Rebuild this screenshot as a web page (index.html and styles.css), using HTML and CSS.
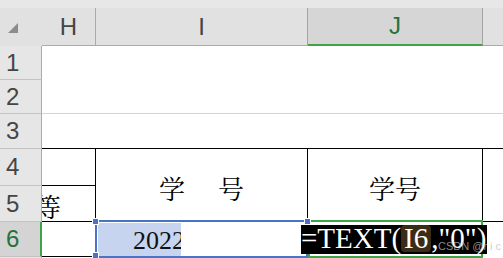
FILE: index.html
```html
<!DOCTYPE html>
<html>
<head>
    <title>Sheet</title>
    <link rel="stylesheet" href="styles.css">
</head>
<body>
    <div class="sheet">
        <div class="strip"></div>

        <div class="hdr corner">
            <svg width="10" height="10" viewBox="0 0 10 10"><polygon points="10,0 10,10 0,10" fill="#8c8c8c"/></svg>
        </div>
        <div class="hdr col-h">H</div>
        <div class="hdr col-i">I</div>
        <div class="hdr col-j">J</div>
        <div class="hdr col-k"></div>

        <div class="rh r1">1</div>
        <div class="rh r2">2</div>
        <div class="rh r3">3</div>
        <div class="rh r4">4</div>
        <div class="rh r5">5</div>
        <div class="rh r6 active">6</div>
        <div class="rh r7"></div>

        <div class="cell top-block"></div>
        <div class="cell row3"></div>

        <div class="cell h4"></div>
        <div class="cell h5"><span class="clip-char">等</span></div>
        <div class="cell i45"><span class="title-spaced"><span>学</span><span>号</span></span></div>
        <div class="cell j45">学号</div>
        <div class="cell k45"></div>

        <div class="cell h6"></div>
        <div class="cell i6"><span class="ref-fill">2022</span></div>
        <div class="cell j6"></div>
        <div class="cell k6"></div>

        <!-- selection + editing overlays -->
        <div class="sel-ref"></div>
        <div class="sel-active"></div>
        <div class="handle tl"></div>
        <div class="handle bl"></div>
        <div class="handle tr"></div>
        <div class="formula">=TEXT(<span class="ref">I6</span>,"0")</div>
        <div class="mark">CSDN @r i c k</div>
    </div>
</body>
</html>
```

FILE: styles.css
```css
body {
    margin: 0;
    background: #fff;
}

.sheet {
    position: relative;
    width: 503px;
    height: 258px;
    overflow: hidden;
    display: grid;
    grid-template-columns: 42px 54px 212px 175px 20px;
    grid-template-rows: 8px 38px 34px 34px 35px 37px 36px 35px 1px;
    font-family: "Liberation Sans", Arial, sans-serif;
}

.strip {
    grid-column: 1 / -1;
    grid-row: 1 / 2;
    background: #e7e7e7;
}

/* column headers */
.hdr {
    grid-row: 2 / 3;
    background: #e1e1e1;
    border-bottom: 1px solid #ababab;
    color: #454545;
    font-size: 24px;
    display: flex;
    align-items: center;
    justify-content: center;
    box-sizing: border-box;
}

.corner {
    grid-column: 1 / 2;
    border-bottom: none;
    justify-content: flex-start;
    align-items: flex-start;
    padding: 15px 0 0 8px;
}

.col-h { grid-column: 2 / 3; border-right: 1px solid #ababab; }
.col-i { grid-column: 3 / 4; border-right: 1px solid #a3a3a3; }
.col-j {
    grid-column: 4 / 5;
    background: #d6d6d6;
    border-right: 1px solid #a3a3a3;
    border-bottom: 2px solid #3fa34a;
    color: #21733f;
}
.col-k { grid-column: 5 / 6; }

/* row headers */
.rh {
    grid-column: 1 / 2;
    background: #e6e6e6;
    border-right: 1px solid #ababab;
    border-bottom: 1px solid #c3c3c3;
    color: #454545;
    font-size: 24px;
    display: flex;
    align-items: center;
    padding-left: 6px;
    box-sizing: border-box;
}

.r1 { grid-row: 3 / 4; }
.r2 { grid-row: 4 / 5; }
.r3 { grid-row: 5 / 6; }
.r4 { grid-row: 6 / 7; }
.r5 { grid-row: 7 / 8; }
.r6 { grid-row: 8 / 9; }
.r7 { grid-row: 9 / 10; border-bottom: none; }

.rh.active {
    background: #d4d4d4;
    color: #21733f;
    border-right: 2px solid #3fa34a;
}

/* cells */
.cell {
    box-sizing: border-box;
    background: #fff;
    font-family: "Noto Serif CJK SC", "Noto Sans CJK SC", serif;
    font-size: 26px;
    color: #000;
    overflow: hidden;
}

.top-block {
    grid-column: 2 / 6;
    grid-row: 3 / 5;
    border-bottom: 1px solid #d4d4d4;
}

.row3 {
    grid-column: 2 / 6;
    grid-row: 5 / 6;
    border-bottom: 1px solid #000;
}

.h4 {
    grid-column: 2 / 3;
    grid-row: 6 / 7;
    border-right: 1px solid #000;
    border-bottom: 1px solid #000;
}

.h5 {
    grid-column: 2 / 3;
    grid-row: 7 / 8;
    border-right: 1px solid #000;
    border-bottom: 1px solid #000;
    display: flex;
    align-items: flex-end;
}

.clip-char {
    margin-left: -7px;
    line-height: 30px;
}

.i45 {
    grid-column: 3 / 4;
    grid-row: 6 / 8;
    border-right: 1px solid #000;
    border-bottom: 1px solid #000;
    display: flex;
    align-items: center;
    justify-content: center;
    padding-top: 5px;
}

.title-spaced {
    display: flex;
    gap: 33px;
}

.j45 {
    grid-column: 4 / 5;
    grid-row: 6 / 8;
    border-right: 1px solid #000;
    border-bottom: 1px solid #000;
    display: flex;
    align-items: center;
    justify-content: center;
    padding-top: 5px;
}

.k45 {
    grid-column: 5 / 6;
    grid-row: 6 / 8;
    border-bottom: 1px solid #000;
}

.h6 {
    grid-column: 2 / 3;
    grid-row: 8 / 9;
    border-right: 1px solid #000;
    border-bottom: 1px solid #000;
}

.i6 {
    grid-column: 3 / 4;
    grid-row: 8 / 9;
    padding: 1px 0 0 2px;
}

.ref-fill {
    display: block;
    width: 83px;
    height: 34px;
    background: #c6d4f0;
    font-family: "Liberation Serif", "Times New Roman", serif;
    font-size: 26px;
    line-height: 36px;
    color: #111;
    padding-left: 35px;
    box-sizing: border-box;
    white-space: nowrap;
    overflow: hidden;
}

.j6 { grid-column: 4 / 5; grid-row: 8 / 9; }
.k6 { grid-column: 5 / 6; grid-row: 8 / 9; }

/* overlays */
.sel-ref {
    position: absolute;
    left: 95px;
    top: 220px;
    width: 213px;
    height: 38px;
    border: 2px solid #4a72c9;
    box-sizing: border-box;
}

.sel-active {
    position: absolute;
    left: 308px;
    top: 220px;
    width: 175px;
    height: 38px;
    border: 2px solid #3fa34a;
    box-sizing: border-box;
}

.handle {
    position: absolute;
    width: 5px;
    height: 5px;
    background: #4a72c9;
    border: 1px solid #fff;
}

.handle.tl { left: 92px; top: 218px; }
.handle.bl { left: 92px; top: 252px; }
.handle.tr { left: 304px; top: 218px; }

.formula {
    position: absolute;
    left: 301px;
    top: 225px;
    height: 29px;
    padding-right: 1px;
    background: #000;
    color: #fff;
    font-family: "Liberation Serif", "Times New Roman", serif;
    font-size: 29px;
    line-height: 27px;
    white-space: nowrap;
}

.formula .ref {
    display: inline-block;
    padding: 0 3px;
    background: #3b2d15;
    border-radius: 4px;
    line-height: 27px;
}

.mark {
    position: absolute;
    left: 438px;
    top: 240px;
    font-family: "Liberation Sans", Arial, sans-serif;
    font-size: 11px;
    color: rgba(190, 190, 190, 0.75);
    white-space: nowrap;
}
```
